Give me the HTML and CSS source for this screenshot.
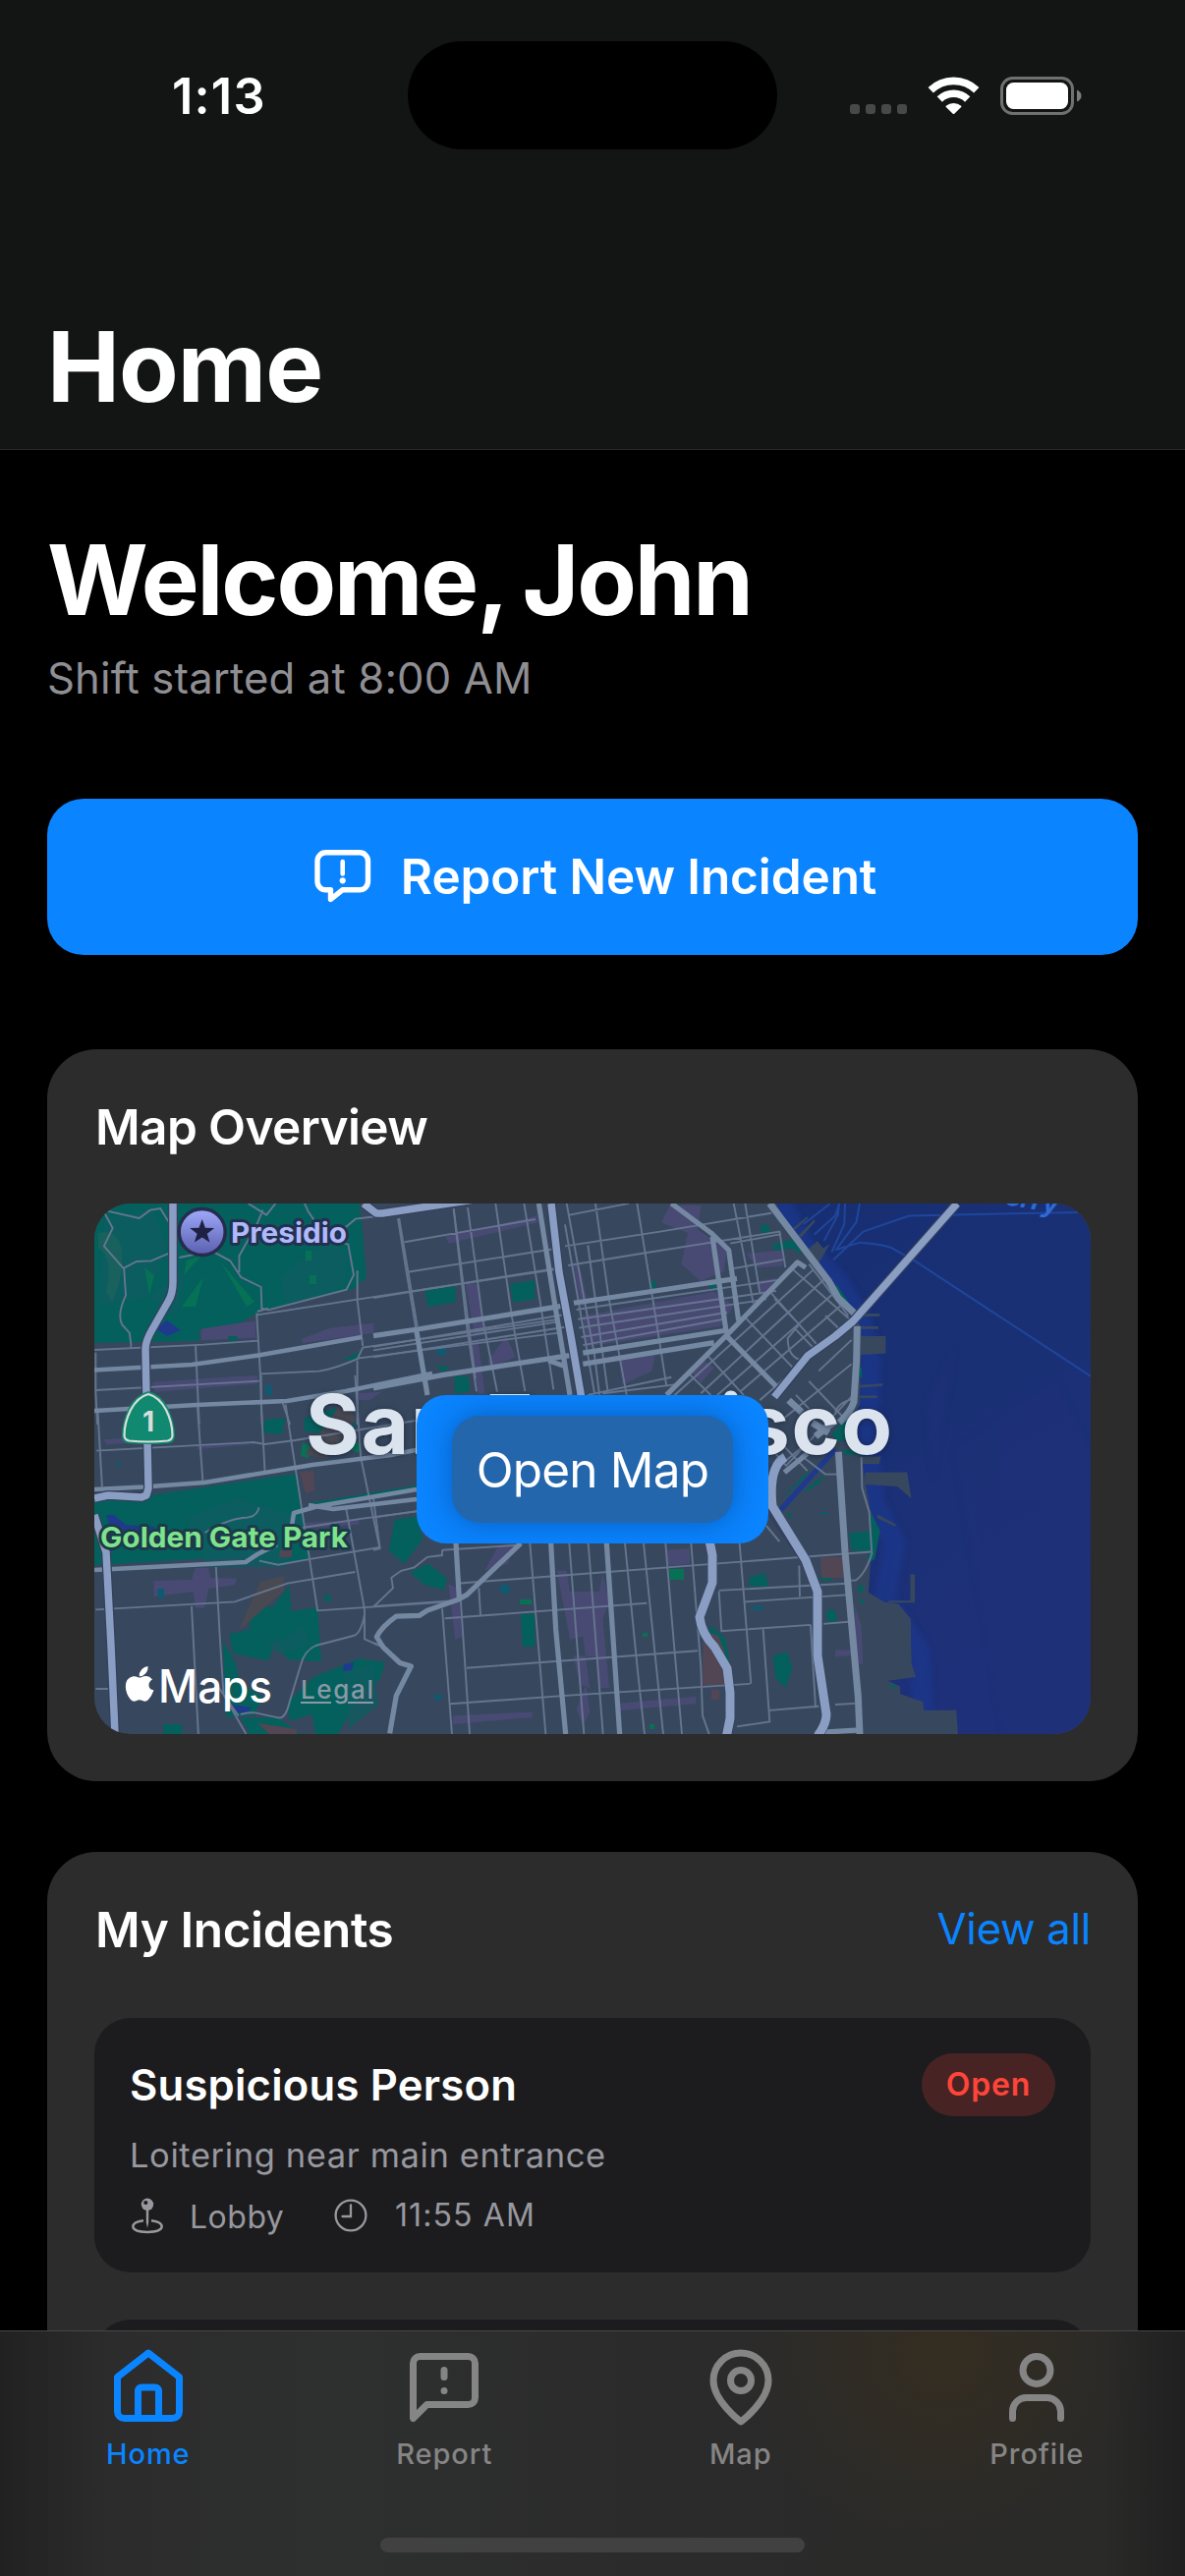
FILE: index.html
```html
<!DOCTYPE html>
<html lang="en">
<head>
<meta charset="utf-8">
<title>Home</title>
<link rel="stylesheet" href="styles.css">
</head>
<body>
<div class="app">
  <header class="header">
    <div class="status">
      <span class="time">1:13</span>
      <span class="island"></span>
      <svg class="status-icons" width="236" height="40" viewBox="0 0 236 40">
        <g fill="#474848"><rect x="0" y="28" width="10" height="10" rx="3"/><rect x="16" y="28" width="10" height="10" rx="3"/><rect x="32" y="28" width="10" height="10" rx="3"/><rect x="48" y="28" width="10" height="10" rx="3"/></g>
        <g fill="none" stroke="#fff" stroke-width="7.6"><path d="M82.2 13.8a33.5 33.5 0 0 1 46.6 0"/><path d="M91.3 23a20.5 20.5 0 0 1 28.4 0"/></g>
        <path d="M97.8 29.8a11.6 11.6 0 0 1 15.4 0q.6.6 0 1.200L106.300 37.700q-.8.8-1.600 0L97.800 31q-.6-.6 0-1.200z" fill="#fff"/>
        <rect x="154.500" y="1.500" width="72" height="36" rx="11" fill="none" stroke="#6f7070" stroke-width="3"/>
        <rect x="159" y="6" width="63" height="27" rx="7.500" fill="#fff"/>
        <path d="M231 13.500q4.500 2 4.500 6t-4.500 6z" fill="#7b7c7c"/>
      </svg>
    </div>
    <h1 class="title">Home</h1>
  </header>

  <main class="content">
    <h2 class="welcome">Welcome, John</h2>
    <p class="shift">Shift started at 8:00 AM</p>

    <button class="report">
      <svg width="58" height="54" viewBox="0 0 58 54" fill="none" stroke="#fff" stroke-width="5.400" stroke-linejoin="round" stroke-linecap="round">
        <path d="M11.500 2.800h34.500a8.500 8.500 0 0 1 8.500 8.500v21a8.500 8.500 0 0 1-8.500 8.500H28.500L16.500 50.500V40.800h-5a8.500 8.500 0 0 1-8.500-8.500v-21a8.500 8.500 0 0 1 8.500-8.500z"/>
        <path d="M28.700 12v12.500" stroke-width="4.600"/><circle cx="28.700" cy="31.300" r="3.100" fill="#fff" stroke="none"/>
      </svg>
      <span>Report New Incident</span>
    </button>

    <section class="card">
      <h3 class="card-title map-title">Map Overview</h3>
      <div class="map">
        <svg class="map-art" width="1014" height="540" viewBox="96 1225 1014 540">
          <defs>
            <linearGradient id="bay" x1="0" y1="0" x2=".35" y2="1"><stop offset="0" stop-color="#172f72"/><stop offset=".5" stop-color="#1a3075"/><stop offset="1" stop-color="#1e3079"/></linearGradient>
            <linearGradient id="pin" x1="0" y1="0" x2="0" y2="1"><stop offset="0" stop-color="#9fa9fb"/><stop offset="1" stop-color="#5a5fae"/></linearGradient>
            <filter id="soft" x="-20%" y="-20%" width="140%" height="140%"><feGaussianBlur stdDeviation="9"/></filter>
            <clipPath id="shore"><path d="M528 60L600 180 635 220 690 270 750 345 775 400 770 600 720 690 775 738 790 830 800 880 828 940 800 1020 795 1100 840 1125 880 1130 915 1170 918 1290 930 1325 850 1335 885 1350 885 1370 950 1390 953 1413 1045 1413 1050 1480 1430 1480 1430 60z"/></clipPath>
          </defs>
          <rect x="96" y="1225" width="1014" height="540" fill="#37485e"/>

          <!-- commercial districts -->
          <g fill="#484a74">
            <g transform="translate(380 1220) scale(.33333 .35077)">
              <path d="M905 20h95l-10 70 90 60-10 60-70 30-60-50 20-90-80-30zM280 240l40 10 20 140-30 10zM220 110l280-60v20l-270 60zM640 340l400-70 60 40-40 60-410 60zM750 470l110-15-10 45-90 40zM970 500l40-30 30 20-40 45zM1140 160l110-10v45l-80 5zM1170 240l60-10-40 70zM300 420l20-5 20 150h-20zM350 470l55-70 30 60-80 30zM610 190l20 5 25 110-20 10zM560 1080h30l10 60h90l10-50 20 80-20 50 20 200h-30l-10-90-70-5zM600 1280l30 130 30 10-20-150zM895 1020l70-5v45l-65 5zM245 1500l240-10v15l-245 20zM745 1465l240-20v20l-230 20zM230 1120l30 10 10 140-20 10zM340 1080l40-70h50l-20 50zM1470 1180l20 60 5 110h-20zM1410 1310h50v15l-50 5zM620 1480l30-70 10 80-20 40z"/>
            </g>
            <g transform="translate(40 1400) scale(.38265 .33333)">
              <path d="M305 628l100-5 10-35h35l5 30 70 2-5 20-70 10-10 60h-25l-5-50-105 15zM300 20l280-20v12l-270 25zM170 196l130-10v15l-120 10zM850 55l60-5-30 25h-30zM700 450l150-10v15l-140 12zM420 215l140-12v8l-140 15z"/>
            </g>
            <g transform="translate(40 1050) scale(.3699 .33333)">
              <path d="M720 940l80-35 120-15v30l-195 32zM445 905l100-15 50-5v50l-150 8zM310 1080l290-25v20l-280 25z"/>
            </g>
          </g>

          <!-- parks -->
          <g fill="#04605c">
            <path d="M96 1225h270l5 52 2 23-13 12-91 21-10 5-13 8-43 7v12l-107 2z"/>
            <g transform="translate(40 1400) scale(.38265 .33333)">
              <path d="M146 385l150-20 390-66 35 260-40 10-90 5-50-22-395 28zM560 700l60 8 45-68 5 80 70-12 10 165-90-5-30-60-20 62-95-20-10-60 55-15zM488 810l35 70 10 60 60 40-20 55-75 10zM660 1000l70-80 120-55 70 10-15 55-50 40-60 125h-60l-10-60-60 20zM535 1045h100l60 50H560zM600 135l55-5-10 50-50-5zM945 440l60-10 15 70-50 75-40-40zM985 600l50-25 50 45-10 35-50-15zM1280 728h38v100h-32zM330 1065h50v30h-50zM715 390l290-55v12l-280 50zM1105 5h30l5 45h-35zM705 130l80-30 60 50-60 30-80-10zM760 670h15v20h-18z"/>
            </g>
            <g transform="translate(40 1050) scale(.3699 .33333)"><path d="M1060 790l85-14v50l-75 15zM1295 770l68-10v58l-60 8zM1142 1052h38l5 45-40 10zM1090 1018l40 8-20 15zM830 1005l55-30-15 25zM520 930h25v14h-25z"/></g>
            <g transform="translate(600 1200) scale(.35714 .38265)">
              <path d="M484 130l20-12 12 20-20 10zM520 175l60-15 28 45-30-20-50 5zM540 855l90-85-20 30zM610 830l60-45-15 25-40 22zM740 942l58-5v52h-50zM455 1060l45-12 10 35h-55zM523 1268l40-10 15 45-20 50-28-25zM340 1185l45 35 25 110-20-60-40-40zM675 1145l25 2 5 30h-28zM760 1085l24-5-10 25zM655 1060l35-10v18h-35zM172 272h18l-3 18h-15zM342 282l18-2v15h-15zM560 890h20l-10 12zM768 1118h18l-8 15z"/>
            </g>
          </g>
          <g fill="#0e5c62" opacity=".75">
            <path d="M106 1240l50-10 14 40-20 50-50 10zM285 1300l50-40 20 20-5 30-60 20zM190 1545l50-20 70 20-20 50-80 0zM260 1664l20 10 30-20 5 20-30 10zM350 1700l30-5 5 40-30 25zM150 1320l40-30-10 50z"/>
          </g>
          <g fill="#067155">
            <path d="M147 1290l10 8-5 20zM185 1330l22-30-8 30zM315 1298h7v9h-7zM311 1273h6v10h-6zM308 1468l8 4-2 12-8-2zM360 1467l8 2-3 10-8-3zM681 1597h15v11h-14zM529 1628h12v5h-12zM654 1662h5v4h-5zM661 1755h5v5h-5zM225 1285l34 40-8 5zM190 1283l15-5-18 20z"/>
          </g>
          <g fill="#0f5a70"><path d="M445 1372h9v7h-10zM270 1410h7v10h-7zM510 1612l10 3-3 8-8-3zM160 1617h7v10h-6zM762 1639l9-6 8 6zM834 1539h8v2h-8zM442 1725h8v5h-8zM118 1490l5-3-1 8z"/></g>
          <g fill="#524654"><path d="M305 1498l14-1 1 20-9 3zM716 1660l15 5 7 18 4 32h-27zM724 1720h8v10h-8zM835 1585h23v21h-22zM262 1754l40 6v5h-28zM285 1578l12-1v8h-13z"/></g>
          <path d="M245 1655l20-45 24-6v15l-45 40zM310 1480l40-55 12 20-30 40z" fill="#494952"/>
          <path d="M158 1352l12-8 14 10-14 6zM108 1542l8 0 12 10 30 2-10 8-35-6zM350 1694l10-2-2 8-9 1zM236 1735l20 3-6 7-12-3z" fill="#1f3a8c"/>
          <path d="M100 1255q22-5 24 20t-10 50l-6-10q8-35-8-45z" fill="#20645c" opacity=".7"/>

          <!-- bay -->
          <g transform="translate(600 1200) scale(.35714 .38265)">
            <g clip-path="url(#shore)">
              <rect x="500" y="60" width="930" height="1420" fill="url(#bay)"/>
              <path d="M540 60l70 120 100 100 60 90 30 110-10 200 20 180 60 110-30 150 100 140 10 170 110 130 0 80" fill="none" stroke="#1f398e" stroke-width="60" opacity=".7" filter="url(#soft)"/>
              <path d="M1040 720l290-180 100 200v740h-250zM960 600l80-150-60 350z" fill="#23307a" opacity=".35" filter="url(#soft)"/>
            </g>
            <path d="M700 720L545 880" stroke="#1f3a8c" stroke-width="15"/>
            <g fill="#37485e"><path d="M770 418h74v46l-74 4zM785 781l120-1 12 70-40-32-92-5zM820 892l55 28-5 4-50-22zM914 1052h13v75h-75v-5h62zM768 358h60l-3 8h-57zM768 392h55v7h-55zM765 548l70-4v7l-70 5zM765 576h55v7h-55zM625 185l25-20 15 20 20-12-38 60zM772 738h58l-5 20h-53z"/><path d="M580 130l40-30 3 4-38 32zM595 150l45-42 3 6-40 42z"/></g>
            <path d="M700 275l50 70-36-18zM690 680l40-45 10 55-30 10zM720 722l60-3v15h-50zM800 885l28 50-15 75-20 15zM850 1345l30 3-15 8zM768 502h8v26h-8z" fill="#04605c"/>
            <g fill="none" stroke="#1f469c" stroke-width="2">
              <path vector-effect="non-scaling-stroke" d="M1430 526L930 220 860 183q-30-10-90-14l-70 20M695 215l85-75 130-42 520-10M610 120l75-54M640 148l60-50 12-32M668 165l40-70 3-30M690 195l36-75 2-55M705 185l55-70 10-50"/>
            </g>
          </g>

          <!-- minor streets -->
          <g fill="none" stroke="#66758f" stroke-width="1.900">
            <g transform="translate(380 1220) scale(.33333 .35077)">
              <path vector-effect="non-scaling-stroke" d="M75 58l25 150 30 170M245 30l40 340 30 190M288 26l45 320 45 215M373 14l50 330 40 215M460 14l50 290 40 250M590 14l85 440 15 115M678 14l40 270 55 285M805 14l50 290 40 240M95 126L495 60M595 48L780 14M105 213L550 146M585 138L880 95 1215 42M0 288l560-86M595 194L840 156 1240 96 1258 200M0 430L575 338M0 440L560 358M0 460L590 372M620 322L1250 234M625 350L1230 268M628 375L1200 292M635 402L1080 330M640 425L1070 350M655 570L910 518M700 565L920 540M585 75l90 490M655 135l60 420M1100 14l60 290M1135 14l45 260M1020 455l110 115M960 505l70 65M1085 205l165-28M1090 130l155-27"/>
              <path vector-effect="non-scaling-stroke" d="M1135 345l160 160M1215 275l155 165M1280 205l180 150M1330 190l120 150M920 570L1345 205M1000 565L1375 235M1050 570L1405 275M1120 560L1440 300M1180 585L1460 350M1300 365l-35 40q0 60 50 65l60-50M1290 380l70 70M1380 340l50 45M1225 290l80 80M1250 640L1460 480M1330 530l110 110M1410 620q10-30 60-40M1290 570l40 40M1360 500L1460 410M1210 720l50 55 200-200M1210 800l100-80M1205 670l120 120M1305 745l75 55h40M1490 750l2 90 22 70 8 120q-20 60-50 78h-30"/>
              <path vector-effect="non-scaling-stroke" d="M0 925l132-18M0 870l20 145-20 5M210 1020l240-15M0 1185l60-55-5-30 30-20 40-10 40-30 45-5v-15M0 1183l270-18M210 1190l30 364M218 1218L835 1174M265 1116L1520 1025M285 1362L990 1312M235 1466L620 1440 1150 1408M478 1000l48 554M598 1000l45 554M656 1000l45 554M768 1000l40 380 20 174M825 1000l60 554M892 1000l20 230 30 324M970 1000l30 360 5 140 20 54M1118 1000l35 408M1055 1137l390-20M1055 1140l8 115L1335 1237M1190 1250l20 268-100 14M1135 1170L1445 1150M1210 1485l150-12M1410 1468l60-3M1335 1237l15 240M1375 1234l75-6M322 1130l5 78M262 1100l32 454M1300 1065l2 90M1200 950l40 45M0 1290q40 10 90 60"/>
            </g>
            <g transform="translate(40 1050) scale(.3699 .33333)">
              <path vector-effect="non-scaling-stroke" d="M175 545l100 25 30-25 28-5 22 40M180 555l22 45-24 55 55 70 5 80q-25 60-10 90l20 25 5 40M233 722l35-20 40-2 60-28M385 690l90-20 50 30 30 50 55 30 2 65 18 5 215-62 20-45-15-93-60-20-50-80-20-50M615 545l-15 40-50 100 0 50M575 525l50 35 25-35M840 600l30-28 60-8M600 865L875 818 1430 725M600 855l30-10M598 860l10 185 5 155M875 730v90l15 140M152 972l300-16 148-12M252 960l-2 8M430 960l10 240M155 980v120l5 100M155 1095L605 1067M610 1045l160-8q50-10 110-40L1430 920M875 1000l15-35 530-85M875 1005v195M670 1135l20 65M990 570l50 330M1140 540l60 520"/>
            </g>
            <g transform="translate(40 1400) scale(.38265 .33333)">
              <path vector-effect="non-scaling-stroke" d="M155 100l12 240M152 230l418-26 30 6 80-12 320-60M420 85l15 240M590 0v90l10 205M655 88l85 630 360-28M840 0l15 250 50 275-180 35-90 18-50-12M815 400l50 315v90l60 30M865 730q-10 60-30 65l-100 30q-30 15-40 60l-30 115q-10 50-30 45l-60-15q-20-2-40 5M470 585l10 210 10 180 60 120M150 715l370-24 140-56 180-35M405 705l18 390M150 957h35M700 465l160-28 145-22M440 480q60-40 100-45 40 0 44-32M530 1040l-55-90M730 400l115-20"/>
            </g>
          </g>

          <!-- arterials -->
          <g fill="none" stroke="#7488a2" stroke-width="5.200" stroke-linejoin="round">
            <path stroke-width="4.600" d="M96 1394.500L195 1389 263 1379.500 368 1361M96 1436l104-6 92-4 60-10 88-18M96 1516l50-2.500 62-4.500 110-18 80-10 30-6M96 1598l154-8 12-8 20-10M424 1516l-100 17-25 7-3 20M424 1526l-85 10-25-4"/>
            <g transform="translate(380 1220) scale(.33333 .35077)">
              <path vector-effect="non-scaling-stroke" d="M0 398L130 380 575 312M612 303L880 265 1110 232M0 550L210 512 600 455M130 375l35 195M640 448L1080 382M640 480L1040 418M505 14l45 270 50 286M535 470l45 15M910 14l120 85 55 50 30 205M1035 110l42 275M1080 400l155 150M895 570L1080 395 1295 185l25 15"/>
              <path vector-effect="non-scaling-stroke" stroke-width="7" d="M1210 14l120 150 60 75 30 50 50 45M1477 370l-2 100-8 120q-10 30-45 60M1420 735l20 290 40 420 5 109M1268 585l40 35M1340 650l50 30M1350 690l60-45"/>
              <path vector-effect="non-scaling-stroke" d="M252 1000l10 160M450 1000L285 1150l-30 15-90 30-25 15-70 2q-45 30-60 60l20 30 50 45 35 10-45 85-20 110M542 1000l15 250 30 304M712 1000l40 554M1255 795l70-55M1350 1550l135-8"/>
            </g>
          </g>

          <!-- freeways -->
          <g fill="none" stroke-linejoin="round">
            <g stroke="#34405c" stroke-width="10">
              <path d="M176 1225v80q0 12-5 20l-16 28q-7 12-7 20l3 142-2 7-5 2-34-2-14 3M96 1542l12 38 5 95 4 90"/>
              <path d="M370 1225l13 10h6l94-14M561 1225l8 70 12 65 12 70"/>
              <path d="M974 1225L868 1345l-18 15-28 20-34 42"/>
              <path d="M786 1490q-6 18 0 50l34 48 12 32v65l9 60q0 10-9 22M722 1568l3 15v28l-13 35q2 17 15 30l13 22 3 25v26l-4 20"/>
            </g>
            <g stroke="#8a9dc3" stroke-width="7.500">
              <path d="M176 1225v80q0 12-5 20l-16 28q-7 12-7 20l3 142-2 7-5 2-34-2-14 3M96 1542l12 38 5 95 4 90"/>
              <path d="M370 1225l13 10h6l94-14M561 1225l8 70 12 65 12 70"/>
              <path d="M974 1225L868 1345l-18 15-28 20-34 42"/>
              <path stroke-width="9" d="M799 1483q-17 10-13 50l34 55 12 32v65l9 60q0 10-9 22M722 1568l3 15v28l-13 35q2 17 15 30l13 22 3 25v26l-4 20"/>
            </g>
          </g>

          <!-- route shield -->
          <path d="M151 1416q13 3 20 17 7 14 7 28 0 7-6 8-20 2-42 0-6-1-6-8 0-14 7-28 8-14 20-17z" fill="#118870"/>
          <path d="M151 1419q11 3 18 16 6.500 13 6.500 26 0 4.500-5 5.500-19 2-39 0-5-1-5-5.500 0-13 6.500-26 7-13 18-16z" fill="none" stroke="#d8ded9" stroke-width="2.200"/>
          <text x="151" y="1457" text-anchor="middle" class="map-shield">1</text>

          <circle cx="205.700" cy="1254" r="23.500" fill="url(#pin)" stroke="#252c4c" stroke-width="3.500"/>
          <path d="M205.700 1241l3.200 8.700 9.300.3-7.400 5.700 2.700 8.900-7.800-5.200-7.800 5.200 2.700-8.900-7.400-5.700 9.300-.3z" fill="#1d2244"/>
          <text x="235" y="1265" textLength="118" lengthAdjust="spacingAndGlyphs" class="map-label presidio">Presidio</text>
          <text x="102" y="1575" textLength="252" lengthAdjust="spacingAndGlyphs" class="map-label park">Golden Gate Park</text>
          <text x="1006" y="1223" transform="rotate(10 1006 1223)" textLength="72" class="map-ferry">Ferry</text>
          <text x="311" y="1480" textLength="597" class="map-city">San Francisco</text>

          <path d="M150.500 1696q.5 4-2.500 7.500-2.800 3-6.300 2.800-.4-3.700 2.500-7 2.700-2.900 6.300-3.300zM156.500 1720.500q-2 5.500-5.500 9.500-2.500 2.500-5.500 1.200-3.500-1.700-7 0-3 1.300-5.500-1.200-5-6-5.200-13.500.2-8.500 7.700-10.200 2.500-.3 5 .9 1.500.7 3.300 0 6.700-3 11.200 2.300-4 2.500-3.500 6.500.5 3.500 5 4.500z" fill="#fff"/>
          <text x="161" y="1732.500" textLength="116" lengthAdjust="spacingAndGlyphs" class="map-brand">Maps</text>
          <text x="306" y="1729" textLength="74" class="map-legal">Legal</text>
          <path d="M306 1733h31M354 1733h26" stroke="#8b98a6" stroke-width="2"/>
        </svg>
        <button class="open-map"><span>Open Map</span></button>
      </div>
    </section>

    <section class="card incidents">
      <div class="card-head">
        <h3 class="card-title incidents-title">My Incidents</h3>
        <a class="view-all">View all</a>
      </div>
      <article class="incident">
        <div class="incident-head">
          <h4 class="incident-title">Suspicious Person</h4>
          <span class="badge">Open</span>
        </div>
        <p class="incident-text">Loitering near main entrance</p>
        <div class="meta">
          <svg class="pin" width="32" height="37" viewBox="0 0 32 37" fill="none" stroke="#98989f">
            <path d="M12 23.300Q1.300 24.600 1.300 29.500 2 34.700 16 35 30 34.700 30.700 29.500 30.700 24.600 20 23.300" stroke-width="2.400"/>
            <path d="M14.800 11h2.400v14l-1.200 6-1.200-6z" fill="#98989f" stroke="none"/>
            <circle cx="16" cy="6.800" r="6.200" fill="#98989f" stroke="none"/><circle cx="14.300" cy="5" r="2.100" fill="#1c1c1e" stroke="none"/>
          </svg>
          <span class="place">Lobby</span>
          <svg class="clock" width="34" height="34" viewBox="0 0 34 34" fill="none" stroke="#98989f" stroke-width="2.300" stroke-linecap="round"><circle cx="17" cy="17" r="15.400"/><path d="M17 6.500V18H8.500"/></svg>
          <span class="when">11:55 AM</span>
        </div>
      </article>
      <article class="incident"></article>
    </section>
  </main>

  <nav class="tabs">
    <div class="tab-row">
      <a class="tab active">
        <svg class="icon" viewBox="0 0 24 24"><path d="M3 9l9-7 9 7v10a2 2 0 0 1-2 2H5a2 2 0 0 1-2-2z"/><path d="M9 21v-8a1 1 0 0 1 1-1h4a1 1 0 0 1 1 1v8"/></svg>
        <span>Home</span>
      </a>
      <a class="tab">
        <svg class="icon" viewBox="0 0 24 24"><path d="M21 15a2 2 0 0 1-2 2H7l-4 4V5a2 2 0 0 1 2-2h14a2 2 0 0 1 2 2z"/><path d="M12 7v2M12 13h.01"/></svg>
        <span>Report</span>
      </a>
      <a class="tab">
        <svg class="icon" viewBox="0 0 24 24"><path d="M20 10c0 6-8 12-8 12s-8-6-8-12a8 8 0 0 1 16 0z"/><circle cx="12" cy="10" r="3"/></svg>
        <span>Map</span>
      </a>
      <a class="tab">
        <svg class="icon" viewBox="0 0 24 24"><path d="M19 21v-2a4 4 0 0 0-4-4H9a4 4 0 0 0-4 4v2"/><circle cx="12" cy="7" r="4"/></svg>
        <span>Profile</span>
      </a>
    </div>
    <div class="indicator"></div>
  </nav>
</div>
</body>
</html>
```
FILE: styles.css
```css
* { box-sizing: border-box; margin: 0; padding: 0; }
body { background: #000; color: #fff; font-family: Inter, "Liberation Sans", sans-serif; }
svg { display: block; flex: none; }
button { border: 0; font: inherit; color: inherit; }
.app { width: 1206px; height: 2622px; display: flex; flex-direction: column; overflow: hidden; }

.header { flex: none; height: 458px; background: #131414; border-bottom: 1.500px solid #292a2a; display: flex; flex-direction: column; justify-content: space-between; padding-bottom: 24px; }
.status { display: grid; grid-template-columns: 415px 376px 415px; align-items: center; height: 194px; }
.time { padding-left: 175px; font-size: 50.500px; font-weight: 600; letter-spacing: 1.200px; }
.island { height: 110px; border-radius: 55px; background: #000; }
.status-icons { margin: 2px 0 0 74px; }
.title, .welcome { font-size: 99px; line-height: 120px; font-weight: 700; }
.title { padding-left: 48px; letter-spacing: -.9px; }

.content { flex: 1; min-height: 0; overflow: hidden; padding: 72px 48px 0; display: flex; flex-direction: column; }
.content > * { flex: none; }
.welcome { letter-spacing: -2.100px; word-spacing: -3px; }
.shift { margin-top: 11px; font-size: 43.600px; line-height: 60px; letter-spacing: .150px; color: #8e8e93; }
.report { margin-top: 92px; height: 159px; padding: 0 0 2px 6px; border-radius: 37px; background: #0a84ff; display: flex; align-items: center; justify-content: center; gap: 30px; font-size: 49.500px; font-weight: 600; letter-spacing: -.1px; }

.card { margin-top: 96px; padding: 49px 48px 48px; border-radius: 50px; background: #2c2c2c; }
.incidents { margin-top: 72px; }
.card-title { padding-left: 1px; font-size: 49.500px; line-height: 60px; font-weight: 600; letter-spacing: -.5px; }
.map-title { letter-spacing: -.6px; }
.incidents-title { letter-spacing: -.4px; }
.card-head { display: flex; justify-content: space-between; align-items: center; }
.view-all { font-size: 43.600px; line-height: 60px; letter-spacing: -.3px; color: #0a84ff; }

.map { position: relative; margin-top: 48px; height: 540px; border-radius: 37px; overflow: hidden; }
.open-map { position: absolute; left: 328px; top: 195px; width: 358px; height: 151px; border-radius: 30px; background: #0a84ff; display: flex; align-items: center; justify-content: center; overflow: hidden; }
.open-map span { width: 286px; height: 109px; line-height: 110px; border-radius: 28px; background: #2466ab; box-shadow: 0 0 30px rgba(0, 20, 60, .35); font-size: 49.500px; font-weight: 400; letter-spacing: -.8px; text-align: center; }
.map-label { font-size: 29px; font-weight: 700; paint-order: stroke; stroke-width: 6px; stroke-linejoin: round; }
.presidio { fill: #b0b9fa; stroke: #23304f; }
.park { fill: #7fe38c; stroke: #1c3a4a; }
.map-city { font-size: 84px; font-weight: 700; fill: #dbe4ee; filter: drop-shadow(0 1px 3px rgba(20, 30, 50, .7)); }
.map-ferry { font-size: 30px; font-weight: 600; font-style: italic; fill: #2f6ad6; }
.map-shield { font-size: 28px; font-weight: 700; fill: #d8ded9; }
.map-brand { font-size: 46px; font-weight: 500; fill: #fff; }
.map-legal { font-size: 26px; font-weight: 500; fill: #8b98a6; }

.incident { margin-top: 49px; min-height: 259px; padding: 36px; border-radius: 37px; background: #1c1c1e; }
.card-head + .incident { margin-top: 60px; }
.incident + .incident { margin-top: 48px; }
.incident-head { display: flex; justify-content: space-between; align-items: center; height: 64px; }
.incident-title { font-size: 43.600px; font-weight: 600; letter-spacing: .2px; }
.badge { width: 136px; height: 64px; line-height: 64px; border-radius: 32px; background: #482324; color: #ff453a; font-size: 32px; font-weight: 600; letter-spacing: .8px; text-align: center; }
.incident-text { margin-top: 16px; font-size: 34.500px; line-height: 48px; letter-spacing: .600px; color: #98989f; }
.meta { margin-top: 17px; height: 40px; display: flex; align-items: center; font-size: 32px; line-height: 40px; color: #98989f; }
.pin { margin-left: 2px; }
.place { width: 146px; padding-left: 27px; margin: 3px 28px 0 0; letter-spacing: .5px; }
.when { padding-left: 28px; letter-spacing: 1.100px; }

.tabs { flex: none; height: 250px; border-top: 1.500px solid #464646; padding-top: 15px; background: radial-gradient(circle at 960px 20px, rgba(62, 48, 24, .5), transparent 200px), linear-gradient(90deg, #212121, #2b2c2b 110px, #2e2f2f 350px, #2b2b2b 650px, #2a2a29 1120px, #202020); }
.tab-row { display: grid; grid-template-columns: repeat(4, 1fr); }
.tab { display: flex; flex-direction: column; align-items: center; gap: 8px; color: #858585; font-size: 29px; line-height: 36px; font-weight: 500; letter-spacing: .9px; }
.active { color: #0a84ff; }
.icon { width: 84px; height: 84px; fill: none; stroke: currentColor; stroke-width: 2; stroke-linecap: round; stroke-linejoin: round; }
.indicator { width: 432px; height: 15px; margin: 67px auto 0; border-radius: 8px; background: #414141; }
```
